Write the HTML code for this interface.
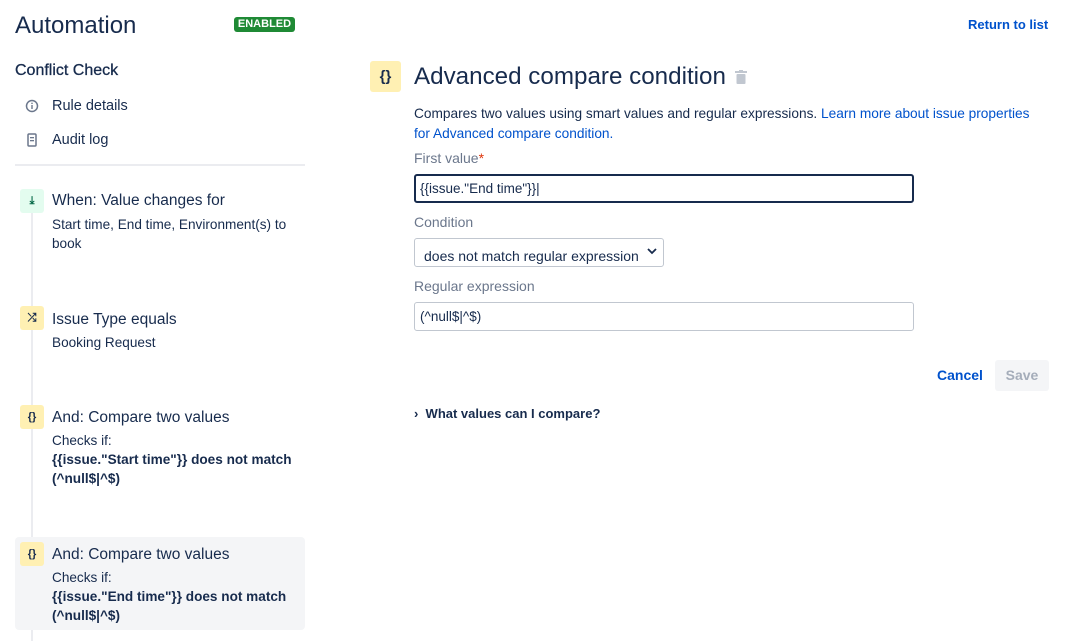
<!DOCTYPE html>
<html><head><style>
*{margin:0;padding:0;box-sizing:border-box}
body{width:1065px;height:641px;background:#fff;font-family:"Liberation Sans",sans-serif;color:#172b4d;position:relative;overflow:hidden}
.a{position:absolute;white-space:nowrap}
.ic{position:absolute;width:24px;height:24px;border-radius:3px;background:#fff0b3;font-size:11px;font-weight:bold;text-align:center;line-height:24px;color:#172b4d}
.t{font-size:15.5px;color:#172b4d}
.s{font-size:13.6px;color:#172b4d;line-height:19px}
.lbl{font-size:14px;color:#6b778c}
</style></head><body>
<div class="a" style="left:15px;top:12px;font-size:24px;">Automation</div>
<div class="a" style="left:234px;top:17px;width:61px;height:15px;background:#1f8a35;border-radius:3px;color:#fff;font-size:11px;font-weight:bold;text-align:center;line-height:15px">ENABLED</div>
<div class="a" style="left:15px;top:62px;font-size:16px;font-weight:normal;color:#172b4d;-webkit-text-stroke:0.3px #172b4d">Conflict Check</div>
<svg class="a" style="left:25px;top:99px" width="14" height="14" viewBox="0 0 14 14"><circle cx="7" cy="7" r="5.5" fill="none" stroke="#6b778c" stroke-width="1.5"/><rect x="6.3" y="6" width="1.4" height="4" fill="#6b778c"/><circle cx="7" cy="4.3" r=".8" fill="#6b778c"/></svg>
<div class="a" style="left:52px;top:98px;font-size:14.5px">Rule details</div>
<svg class="a" style="left:27px;top:133px" width="10" height="14" viewBox="0 0 10 14"><rect x="1" y="1" width="8" height="12" rx="1" fill="none" stroke="#6b778c" stroke-width="1.5"/><rect x="3" y="4" width="4" height="1.3" fill="#6b778c"/><rect x="3" y="7" width="4" height="1.3" fill="#6b778c"/></svg>
<div class="a" style="left:52px;top:132px;font-size:14.5px">Audit log</div>
<div class="a" style="left:15px;top:164px;width:290px;height:2px;background:#ebecf0"></div>
<div class="a" style="left:31px;top:205px;width:2px;height:436px;background:#ebecf0"></div>
<div class="a" style="left:15px;top:537px;width:290px;height:93px;background:#f4f5f7;border-radius:4px"></div>
<div class="ic" style="left:20px;top:189px;background:#e3fcef;color:#006644">⤓</div>
<div class="a t" style="left:52px;top:192px">When: Value changes for</div>
<div class="a s" style="left:52px;top:215px">Start time, End time, Environment(s) to<br>book</div>
<div class="ic" style="left:20px;top:306px">⤮</div>
<div class="a t" style="left:52px;top:311px">Issue Type equals</div>
<div class="a s" style="left:52px;top:333px">Booking Request</div>
<div class="ic" style="left:20px;top:405px">{}</div>
<div class="a t" style="left:52px;top:409px">And: Compare two values</div>
<div class="a s" style="left:52px;top:431px">Checks if:<br><b>{{issue."Start time"}} does not match<br>(^null$|^$)</b></div>
<div class="ic" style="left:20px;top:542px">{}</div>
<div class="a t" style="left:52px;top:546px">And: Compare two values</div>
<div class="a s" style="left:52px;top:568px">Checks if:<br><b>{{issue."End time"}} does not match<br>(^null$|^$)</b></div>

<div class="a" style="left:968px;top:17px;font-size:13px;font-weight:bold;color:#0052cc">Return to list</div>
<div class="ic" style="left:370px;top:61px;width:31px;height:31px;line-height:31px;font-size:15px">{}</div>
<div class="a" style="left:414px;top:63px;font-size:24.2px;">Advanced compare condition</div>
<svg class="a" style="left:735px;top:70px" width="12" height="14" viewBox="0 0 12 14"><rect x="0" y="1" width="12" height="2" fill="#c1c7d0"/><rect x="4" y="0" width="4" height="2" fill="#c1c7d0"/><rect x="1.5" y="4" width="9" height="10" rx="1" fill="#c1c7d0"/></svg>
<div class="a" style="left:414px;top:104px;font-size:13.7px;line-height:19.5px">Compares two values using smart values and regular expressions. <span style="color:#0052cc">Learn more about issue properties<br>for Advanced compare condition.</span></div>
<div class="a lbl" style="left:414px;top:150px">First value<span style="color:#de350b">*</span></div>
<div class="a" style="left:414px;top:174px;width:500px;height:29px;border:2px solid #172b4d;border-radius:3px;font-size:13.5px;padding:4px 4px;line-height:18px">{{issue."End time"}}|</div>
<div class="a lbl" style="left:414px;top:214px">Condition</div>
<div class="a" style="left:414px;top:238px;width:250px;height:29px;border:1px solid #c1c7d0;border-radius:3px;font-size:14px;padding:8px 9px;line-height:18px">does not match regular expression</div>
<svg class="a" style="left:647px;top:247px" width="10" height="8" viewBox="0 0 10 8"><path d="M1 2l4 4 4-4" fill="none" stroke="#172b4d" stroke-width="1.8"/></svg>
<div class="a lbl" style="left:414px;top:278px">Regular expression</div>
<div class="a" style="left:414px;top:302px;width:500px;height:29px;border:1px solid #c1c7d0;border-radius:3px;font-size:13.5px;padding:5px 5px;line-height:18px">(^null$|^$)</div>
<div class="a" style="left:937px;top:367px;font-size:14px;font-weight:bold;color:#0052cc">Cancel</div>
<div class="a" style="left:995px;top:360px;width:54px;height:31px;background:#f4f5f7;border-radius:3px;color:#a5adba;font-size:14px;font-weight:bold;text-align:center;line-height:31px">Save</div>
<div class="a" style="left:414px;top:406px;font-size:13px;font-weight:bold;color:#172b4d">›&nbsp; What values can I compare?</div>
</body></html>
